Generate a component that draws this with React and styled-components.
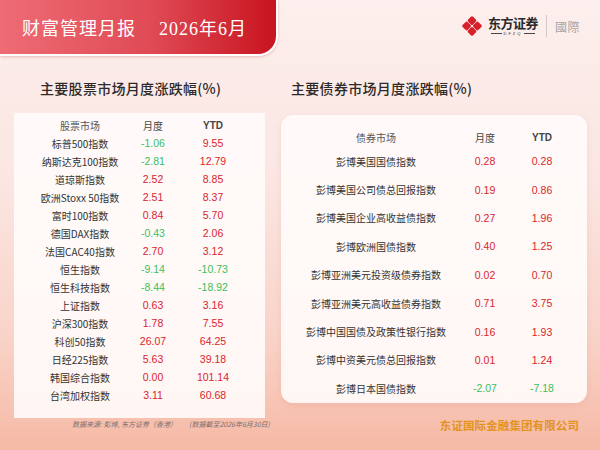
import styled, { createGlobalStyle } from 'styled-components'

const GlobalStyle = createGlobalStyle`
  html, body {
    margin: 0;
    padding: 0;
  }
  body {
    font-family: "Noto Sans CJK SC", "Liberation Sans", sans-serif;
  }
`

const Page = styled.div`
  width: 600px;
  height: 450px;
  overflow: hidden;
  background: linear-gradient(180deg, #fcefed 0%, #fbe6e2 40%, #f9d3c8 75%, #f6b9a5 100%);
  display: flex;
  flex-direction: column;
`

//--------- HEADER ---------
const Header = styled.div`
  display: flex;
  justify-content: space-between;
  align-items: flex-start;
  height: 58px;
`

const Banner = styled.div`
  width: 278px;
  height: 56px;
  box-sizing: border-box;
  border-right: 2px solid #fff;
  border-bottom: 2px solid #fff;
  border-bottom-right-radius: 20px;
  background: linear-gradient(90deg, #ee6c75 0%, #df4a55 55%, #c8141f 100%);
  box-shadow: 0 1px 3px rgba(180, 40, 40, 0.25);
  display: flex;
  align-items: center;
  padding-left: 22px;
  gap: 23px;
  color: #fff;
  font-family: "Liberation Serif", "Noto Sans CJK SC", serif;
  font-size: 18px;
  letter-spacing: 1px;
`

const Brand = styled.div`
  display: flex;
  align-items: center;
  margin-top: 15px;
  margin-right: 20px;
`

const BrandMark = styled.div`
  display: flex;
  flex-direction: column;
  align-items: center;
  gap: 2px;
  margin-left: 6px;
`

const BrandName = styled.div`
  font-size: 13px;
  font-weight: 700;
  line-height: 13px;
  color: #2a2a2a;
  letter-spacing: -0.5px;
`

const BrandSub = styled.div`
  display: flex;
  align-items: center;
  gap: 2px;
  font-family: "Liberation Sans", sans-serif;
  font-size: 4px;
  line-height: 5px;
  letter-spacing: 2px;
  color: #333;
  &::before, &::after {
    content: '';
    width: 11px;
    height: 1px;
    background: #444;
  }
`

const Divider = styled.div`
  width: 1px;
  height: 22px;
  background: #d6c8c6;
  margin: 0 8px;
`

const Intl = styled.div`
  font-size: 12px;
  color: #a9a3a3;
  letter-spacing: 0.5px;
`

//--------- TABLES ---------
const Body = styled.div`
  display: grid;
  grid-template-columns: 251px 306px;
  column-gap: 16px;
  padding-left: 14px;
`

const Section = styled.div`
  display: flex;
  flex-direction: column;
`

const SectionTitle = styled.div`
  font-size: 14px;
  font-weight: 500;
  color: #2f2a2a;
  height: 20px;
  line-height: 20px;
  margin-top: 20px;
  padding-left: ${({ $indent }) => $indent}px;
  letter-spacing: 0.3px;
`

const Panel = styled.div`
  margin-top: ${({ $gap }) => $gap}px;
  background: rgba(255, 252, 251, 0.9);
  border-radius: ${({ $round }) => ($round ? '12px' : '0')};
  box-shadow: ${({ $round }) => ($round ? '0 2px 6px rgba(200, 120, 110, 0.15)' : 'none')};
  padding: ${({ $pad }) => $pad};
`

const Row = styled.div`
  display: grid;
  grid-template-columns: ${({ $cols }) => $cols};
  height: ${({ $h }) => $h}px;
  align-items: center;
  font-size: 10px;
  text-align: center;
  white-space: nowrap;
`

const Name = styled.span`
  color: ${({ $head }) => ($head ? '#555' : '#333')};
`

const Head = styled.span`
  color: #444;
  font-family: ${({ $latin }) => ($latin ? '"Liberation Sans", sans-serif' : 'inherit')};
  font-weight: ${({ $latin }) => ($latin ? 700 : 400)};
`

const Value = styled.span`
  font-family: "Liberation Sans", sans-serif;
  font-size: 10.5px;
  color: ${({ $v }) => ($v < 0 ? '#3cbf5c' : '#d9252c')};
`

const Note = styled.div`
  margin-top: 1px;
  display: flex;
  justify-content: flex-end;
  gap: 12px;
  margin-right: -5px;
  font-size: 7px;
  font-style: italic;
  color: #7a7070;
`

const Company = styled.div`
  margin-top: 14px;
  align-self: flex-end;
  margin-right: 8px;
  font-size: 11.5px;
  font-weight: 700;
  color: #e39320;
  letter-spacing: 0.1px;
`

const stocks = [
  ['标普500指数', -1.06, 9.55],
  ['纳斯达克100指数', -2.81, 12.79],
  ['道琼斯指数', 2.52, 8.85],
  ['欧洲Stoxx 50指数', 2.51, 8.37],
  ['富时100指数', 0.84, 5.70],
  ['德国DAX指数', -0.43, 2.06],
  ['法国CAC40指数', 2.70, 3.12],
  ['恒生指数', -9.14, -10.73],
  ['恒生科技指数', -8.44, -18.92],
  ['上证指数', 0.63, 3.16],
  ['沪深300指数', 1.78, 7.55],
  ['科创50指数', 26.07, 64.25],
  ['日经225指数', 5.63, 39.18],
  ['韩国综合指数', 0.00, 101.14],
  ['台湾加权指数', 3.11, 60.68],
]

const bonds = [
  ['彭博美国国债指数', 0.28, 0.28],
  ['彭博美国公司债总回报指数', 0.19, 0.86],
  ['彭博美国企业高收益债指数', 0.27, 1.96],
  ['彭博欧洲国债指数', 0.40, 1.25],
  ['彭博亚洲美元投资级债券指数', 0.02, 0.70],
  ['彭博亚洲美元高收益债券指数', 0.71, 3.75],
  ['彭博中国国债及政策性银行指数', 0.16, 1.93],
  ['彭博中资美元债总回报指数', 0.01, 1.24],
  ['彭博日本国债指数', -2.07, -7.18],
]

const stockCols = '108px 38px 82px'
const bondCols = '154px 64px 50px'

function Logo() {
  const lobes = [[10, 4.6], [15.4, 10], [10, 15.4], [4.6, 10]]
  return (
    <svg width="20" height="20" viewBox="0 0 20 20">
      {lobes.map(([x, y]) => (
        <rect key={`${x}-${y}`} x={x - 3.5} y={y - 3.5} width="7" height="7" rx="1.6"
          fill="#d8202a" transform={`rotate(45 ${x} ${y})`} />
      ))}
    </svg>
  )
}

export default function App() {
  return (
    <>
      <GlobalStyle />
      <Page>
        <Header>
          <Banner>
            <span>财富管理月报</span>
            <span>2026年6月</span>
          </Banner>
          <Brand>
            <Logo />
            <BrandMark>
              <BrandName>东方证券</BrandName>
              <BrandSub>DFZQ</BrandSub>
            </BrandMark>
            <Divider />
            <Intl>國際</Intl>
          </Brand>
        </Header>
        <Body>
          <Section>
            <SectionTitle $indent={26}>主要股票市场月度涨跌幅(%)</SectionTitle>
            <Panel $gap={15} $pad="3px 0 14px 12px">
              <Row $cols={stockCols} $h={18}>
                <Name $head>股票市场</Name>
                <Head>月度</Head>
                <Head $latin>YTD</Head>
              </Row>
              {stocks.map(([name, m, y]) => (
                <Row key={name} $cols={stockCols} $h={18}>
                  <Name>{name}</Name>
                  <Value $v={m}>{m.toFixed(2)}</Value>
                  <Value $v={y}>{y.toFixed(2)}</Value>
                </Row>
              ))}
            </Panel>
            <Note>
              <span>数据来源: 彭博, 东方证券（香港）</span>
              <span>(数据截至2026年6月30日)</span>
            </Note>
          </Section>
          <Section>
            <SectionTitle $indent={10}>主要债券市场月度涨跌幅(%)</SectionTitle>
            <Panel $gap={17} $round $pad="12px 0 0 18px">
              <Row $cols={bondCols} $h={20}>
                <Name $head>债券市场</Name>
                <Head>月度</Head>
                <Head $latin>YTD</Head>
              </Row>
              {bonds.map(([name, m, y]) => (
                <Row key={name} $cols={bondCols} $h={28.4}>
                  <Name>{name}</Name>
                  <Value $v={m}>{m.toFixed(2)}</Value>
                  <Value $v={y}>{y.toFixed(2)}</Value>
                </Row>
              ))}
            </Panel>
            <Company>东证国际金融集团有限公司</Company>
          </Section>
        </Body>
      </Page>
    </>
  )
}
